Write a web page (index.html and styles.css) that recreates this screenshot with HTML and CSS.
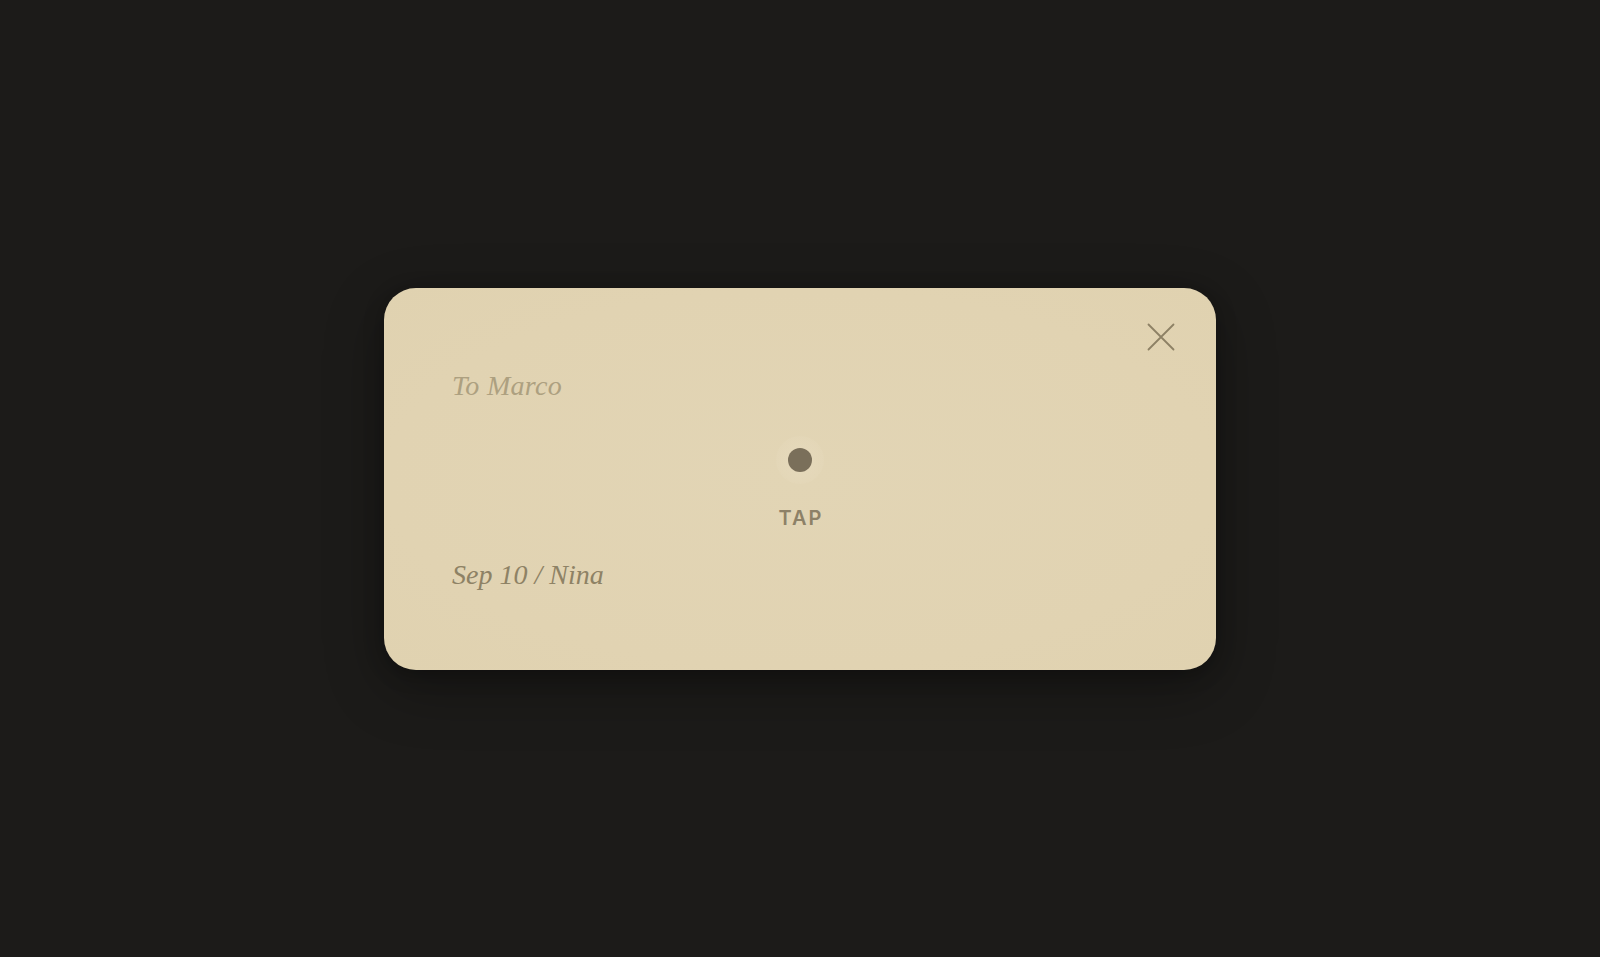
FILE: index.html
```html
<!DOCTYPE html>
<html lang="en">
<head>
<meta charset="utf-8">
<title>Note</title>
<link rel="stylesheet" href="styles.css">
</head>
<body>
<main class="stage">
  <section class="card">
    <button class="close" aria-label="Close">
      <svg viewBox="0 0 28 28" width="28" height="28" aria-hidden="true">
        <path d="M1.5 1.5 L26.5 26.5 M26.5 1.5 L1.5 26.5" fill="none" stroke="#8d8165" stroke-width="1.8" stroke-linecap="round"/>
      </svg>
    </button>
    <p class="to">To Marco</p>
    <div class="tap">
      <span class="halo"><span class="dot"></span></span>
      <span class="tap-label">TAP</span>
    </div>
    <p class="sign">Sep 10 / Nina</p>
  </section>
</main>
</body>
</html>
```

FILE: styles.css
```css
html, body {
  margin: 0;
  padding: 0;
  height: 100%;
  background: #1c1b19;
}

.stage {
  height: 100%;
  display: flex;
  align-items: center;
  justify-content: center;
}

.card {
  position: relative;
  box-sizing: border-box;
  width: 832px;
  height: 382px;
  padding: 81px 68px 0;
  border-radius: 32px;
  background: radial-gradient(ellipse at 50% 50%, #e2d5b5 0%, #e1d3b2 70%, #e0d2b0 100%);
  box-shadow: 0 18px 60px rgba(0, 0, 0, 0.3), 0 4px 20px rgba(0, 0, 0, 0.25);
  display: flex;
  flex-direction: column;
}

.close {
  position: absolute;
  top: 35px;
  right: 41px;
  width: 28px;
  height: 28px;
  padding: 0;
  border: 0;
  background: transparent;
  cursor: pointer;
  display: block;
}

.close svg {
  display: block;
}

.to,
.sign {
  margin: 0;
  font-family: "Liberation Serif", "DejaVu Serif", serif;
  font-style: italic;
  font-size: 28px;
  line-height: 34px;
}

.to {
  color: #ada080;
  letter-spacing: 0.3px;
}

.sign {
  margin-top: 28px;
  color: #8e8265;
}

.tap {
  margin-top: 33px;
  display: flex;
  flex-direction: column;
  align-items: center;
  gap: 22px;
}

.halo {
  width: 48px;
  height: 48px;
  border-radius: 50%;
  background: radial-gradient(circle, rgba(236, 225, 200, 0.4) 0%, rgba(236, 225, 200, 0.18) 60%, rgba(236, 225, 200, 0) 100%);
  display: flex;
  align-items: center;
  justify-content: center;
}

.dot {
  width: 24px;
  height: 24px;
  border-radius: 50%;
  background: #7a6f5a;
}

.tap-label {
  font-family: Inter, "Liberation Sans", sans-serif;
  font-weight: 600;
  font-size: 20px;
  line-height: 24px;
  letter-spacing: 2px;
  margin-right: -2px;
  color: #8d8167;
}
```
